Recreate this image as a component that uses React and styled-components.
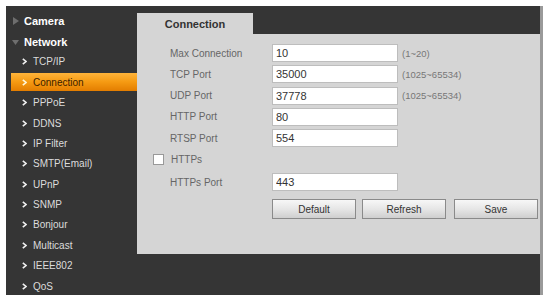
import React, { useState } from "react"
import styled, { createGlobalStyle } from "styled-components"

const GlobalStyle = createGlobalStyle`
  html, body {
    margin: 0;
    padding: 0;
    background: #fff;
    font-family: "Liberation Sans", Arial, sans-serif;
  }
`

const Frame = styled.div`
  display: flex;
  margin: 6px 0 0 6px;
  width: 534px;
  height: 289px;
  background: #353535;
  border-right: 3px solid #9a9a9a;
  overflow: hidden;
`

const Sidebar = styled.ul`
  list-style: none;
  margin: 0;
  padding: 5px 0 0 0;
  width: 131px;
  flex-shrink: 0;
  display: flex;
  flex-direction: column;
`

const TopItem = styled.li`
  display: flex;
  align-items: center;
  flex-shrink: 0;
  height: 20.4px;
  padding-left: 6px;
  gap: 5px;
  color: #fff;
  font-weight: 700;
  font-size: 11px;
`

const SubItem = styled.li`
  display: flex;
  align-items: center;
  flex-shrink: 0;
  height: 18px;
  margin: 1.2px 0 1.2px 5px;
  padding-left: 11px;
  gap: 6px;
  font-size: 10px;
  color: ${(p) => (p.$active ? "#3a2000" : "#dcdcdc")};
  background: ${(p) =>
    p.$active
      ? "linear-gradient(180deg, #ffb43a 0%, #f59a12 50%, #e37d00 100%)"
      : "transparent"};
`

const Main = styled.div`
  flex: 1;
  display: flex;
  flex-direction: column;
`

const TabBar = styled.div`
  height: 28px;
  display: flex;
  align-items: flex-end;
`

const Tab = styled.div`
  width: 116px;
  height: 21px;
  background: #d5d5d5;
  display: flex;
  align-items: center;
  justify-content: center;
  font-size: 11px;
  font-weight: 700;
  color: #333;
`

const Panel = styled.div`
  height: 220px;
  background: #d5d5d5;
  padding: 10px 0 0 16px;
  box-sizing: border-box;
`

const Row = styled.div`
  display: flex;
  align-items: center;
  height: 18px;
  margin-bottom: ${(p) => p.$gap || "3.3px"};
`

const Label = styled.span`
  width: 102px;
  padding-left: 17px;
  font-size: 10px;
  color: #666;
`

const CheckLabel = styled.label`
  display: flex;
  align-items: center;
  gap: 7px;
  font-size: 10px;
  color: #666;
`

const Check = styled.span`
  width: 9px;
  height: 9px;
  background: #fff;
  border: 1px solid #999;
`

const Input = styled.input`
  width: 126px;
  height: 18px;
  box-sizing: border-box;
  border: 1px solid #bdbdbd;
  background: #fff;
  padding: 0 3px;
  font-family: "Liberation Sans", Arial, sans-serif;
  font-size: 11px;
  color: #333;
  outline: none;
`

const Range = styled.span`
  margin-left: 4px;
  font-size: 9.5px;
  color: #777;
`

const Buttons = styled.div`
  display: flex;
  margin-left: 119px;
  margin-top: 8px;
`

const Button = styled.button`
  width: 84px;
  height: 20px;
  margin-right: ${(p) => p.$mr || "6px"};
  border: 1px solid #8a8a8a;
  background: linear-gradient(180deg, #f7f7f7 0%, #e6e6e6 50%, #cfcfcf 100%);
  font-family: "Liberation Sans", Arial, sans-serif;
  font-size: 10px;
  color: #333;
  padding: 0;
`

const Triangle = ({ down }) => (
  <svg width="7" height="8" viewBox="0 0 7 8">
    {down ? (
      <polygon points="0,2 7,2 3.5,7" fill="#6e6e6e" />
    ) : (
      <polygon points="1,0 7,4 1,8" fill="#6e6e6e" />
    )}
  </svg>
)

const Chevron = ({ active }) => (
  <svg width="5" height="7" viewBox="0 0 5 7">
    <polyline
      points="0.8,0.8 4,3.5 0.8,6.2"
      fill="none"
      stroke={active ? "#fff6d8" : "#f0f0f0"}
      strokeWidth="1.6"
    />
  </svg>
)

const subItems = [
  "TCP/IP",
  "Connection",
  "PPPoE",
  "DDNS",
  "IP Filter",
  "SMTP(Email)",
  "UPnP",
  "SNMP",
  "Bonjour",
  "Multicast",
  "IEEE802",
  "QoS",
]

const fields = [
  { label: "Max Connection", value: "10", range: "(1~20)" },
  { label: "TCP Port", value: "35000", range: "(1025~65534)" },
  { label: "UDP Port", value: "37778", range: "(1025~65534)" },
  { label: "HTTP Port", value: "80" },
  { label: "RTSP Port", value: "554" },
]

export default function App() {
  const [active] = useState("Connection")
  return (
    <>
      <GlobalStyle />
      <Frame>
        <Sidebar>
          <TopItem>
            <Triangle />
            Camera
          </TopItem>
          <TopItem>
            <Triangle down />
            Network
          </TopItem>
          {subItems.map((s) => (
            <SubItem key={s} $active={s === active}>
              <Chevron active={s === active} />
              {s}
            </SubItem>
          ))}
        </Sidebar>
        <Main>
          <TabBar>
            <Tab>Connection</Tab>
          </TabBar>
          <Panel>
            {fields.map((f) => (
              <Row key={f.label}>
                <Label>{f.label}</Label>
                <Input defaultValue={f.value} />
                {f.range && <Range>{f.range}</Range>}
              </Row>
            ))}
            <Row $gap="5px">
              <CheckLabel>
                <Check />
                HTTPs
              </CheckLabel>
            </Row>
            <Row>
              <Label>HTTPs Port</Label>
              <Input defaultValue="443" />
            </Row>
            <Buttons>
              <Button>Default</Button>
              <Button $mr="8px">Refresh</Button>
              <Button>Save</Button>
            </Buttons>
          </Panel>
        </Main>
      </Frame>
    </>
  )
}
